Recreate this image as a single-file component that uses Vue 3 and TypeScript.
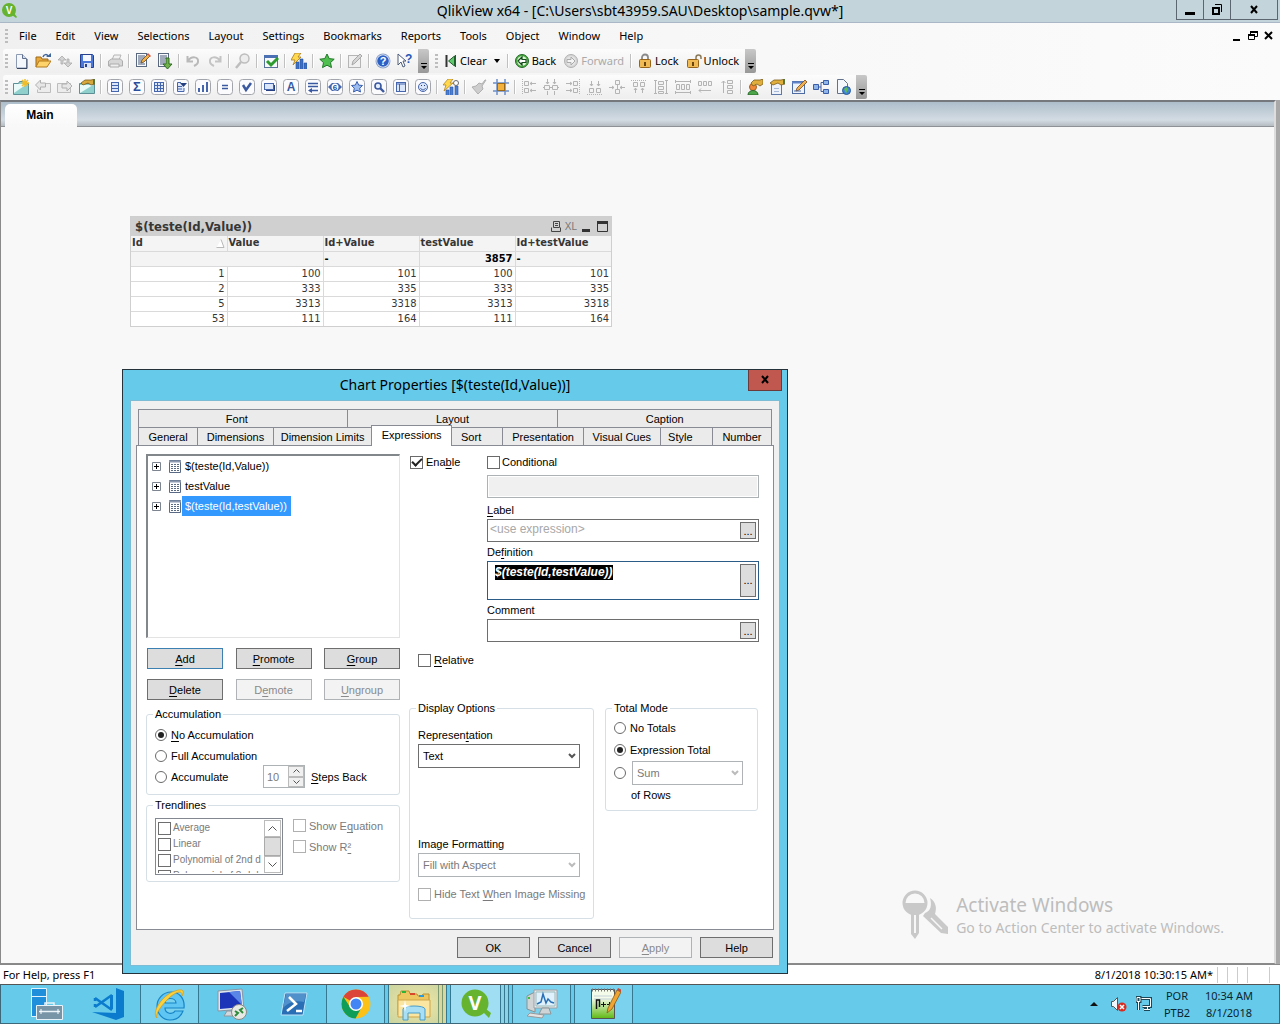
<script setup lang="ts">
import { onMounted, ref } from 'vue'

type ToolItem = { icon: string; label: string; off?: boolean } | null

const menus = ['File', 'Edit', 'View', 'Selections', 'Layout', 'Settings', 'Bookmarks', 'Reports', 'Tools', 'Object', 'Window', 'Help']

const boxed = (inner: string): string =>
  `<rect x=".5" y=".5" width="15" height="15" rx="3" fill="#fbfbfd" stroke="#a3a5ac"/>${inner}`
const glyph = (size: number, y: number, text: string, fill = '#2c4c9c'): string =>
  `<text x="8" y="${y}" font-family="Liberation Sans, sans-serif" font-weight="700" font-size="${size}" text-anchor="middle" fill="${fill}">${text}</text>`
const aligned = (inner: string): string => `<g fill="#f3f3f3" stroke="#b4b4b4">${inner}</g>`

const icons: Record<string, string> = {
  new: '<path d="M3.500 1.500h6l4 4v9.500h-10z" fill="#f4f8fd" stroke="#8c9ab4"/><path d="M9.500 1.500v4h4" fill="#cfdcec" stroke="#64718c"/><path d="M4 15.500h10V6" fill="none" stroke="#38465f"/>',
  open: '<path d="M1 14V4h5l1 2h6v3" fill="#e9a83a" stroke="#9c6a1a"/><path d="M1 14l3-6h12l-4 6z" fill="#ffd36b" stroke="#b37a1e"/><path d="M8 4c1-3 4-3 5-1" fill="none" stroke="#41669a" stroke-width="1.500"/><path d="M11 4h5V0z" fill="#41669a"/>',
  reload: '<path d="M1 7l4-4 4 4H6v4H4V7zM7 10h3V6h2v4h3l-4 4z" fill="#d3d3d3" stroke="#a9a9a9" stroke-width=".8"/>',
  save: '<path d="M1.500 1.500h12l1 1v12h-13z" fill="#4b78d8" stroke="#24408f"/><rect x="4" y="2" width="8" height="6" fill="#f4f7ff"/><rect x="5" y="10" width="7" height="5" fill="#dbe3f4"/><rect x="6" y="11" width="2" height="3" fill="#24408f"/>',
  print: '<path d="M5 7l2-5h7l-2 5z" fill="#f1f1f1" stroke="#b6b6b6"/><path d="M1.500 8l3-2h9l2 2v5h-14z" fill="#d7d7d7" stroke="#adadad"/><path d="M3 11h9v3H3z" fill="#efefef" stroke="#adadad"/>',
  script: '<rect x="1.500" y=".5" width="10" height="13" fill="#f7f9fc" stroke="#59677f"/><path d="M3 3h7M3 5h6M3 7h4M3 9h4M3 11h7" stroke="#4a5b78"/><path d="M6 10l1-3 6-6 2 2-6 6z" fill="#f2b04b" stroke="#6a4a24" stroke-width=".8"/><path d="M12 1l1-1 3 3-1 1z" fill="#d55a4a"/>',
  reloadDoc: '<rect x="1.500" y=".5" width="10" height="13" fill="#f7f9fc" stroke="#59677f"/><path d="M3 3h7M3 5h7M3 7h5M3 9h5M3 11h5" stroke="#4a5b78"/><path d="M9 5h3v6h3l-4.500 5L6 11h3z" fill="#6fb04b" stroke="#2f6b22"/>',
  undo: '<path d="M2.500 3v5.500H8M3 8c3-5 11-5 10 1 0 2-2 3-4 4" fill="none" stroke="#b9b9b9" stroke-width="2"/>',
  redo: '<path d="M13.500 3v5.500H8M13 8C10 3 2 3 3 9c0 2 2 3 4 4" fill="none" stroke="#c4c4c4" stroke-width="2"/>',
  find: '<circle cx="9.500" cy="5.500" r="4.500" fill="#ededed" stroke="#bdbdbd" stroke-width="1.500"/><path d="M6 9l-5 6" stroke="#bdbdbd" stroke-width="2.500"/>',
  select: '<rect x="1.500" y="2.500" width="13" height="12" fill="#f6f8fc" stroke="#58729c"/><rect x="1" y="2" width="14" height="3" fill="#4c70b4"/><path d="M4 8l4 4 7-7" fill="none" stroke="#2d9b2d" stroke-width="3"/>',
  wizard: '<path d="M5 16V9h3v7M9 16V6h3v10M13 16v-6h3v6" fill="#3d6fc2" stroke="#2750a0" stroke-width=".6"/><path d="M4 0h6L7 4h3L2 12l2-5H0z" fill="#ffd84d" stroke="#a8791a" stroke-width=".8"/>',
  star: '<path d="M8 1l2.200 4.600 5 .6-3.700 3.400 1 5L8 12.200 3.500 14.600l1-5L.8 6.200l5-.6z" fill="#4fc04f" stroke="#22772a"/>',
  note: '<rect x="1.500" y="2.500" width="12" height="12" fill="#f0f0f0" stroke="#b5b5b5"/><path d="M5 12l1-4 7-7 2 2-7 7z" fill="#d5d5d5" stroke="#a8a8a8"/>',
  help: '<circle cx="8" cy="8" r="7.500" fill="#8fa3c8"/><circle cx="8" cy="8" r="6.500" fill="#e8effb"/><circle cx="8" cy="8" r="5.800" fill="#2c5fc4"/>' + glyph(11, 12, '?', '#fff'),
  whats: '<path d="M1 1v11l3-3 2 5 2-1-2-5h3z" fill="#fff" stroke="#4c5c7c"/><text x="8" y="10" font-family="Liberation Sans, sans-serif" font-weight="700" font-size="12" fill="#2458b8">?</text>',
  addSheet: '<path d="M.5 4.500h5l1-2h4v2h5v11H.5z" fill="#8fd0cc" stroke="#5d9096"/><path d="M1 14L14 5H1z" fill="#e9faf8"/><path d="M12 0v8M8 4h8M9 1l6 6M15 1L9 7" stroke="#f0be2c" stroke-width="1.500"/>',
  left: '<path d="M5.500 4.500h10v9h-13v-3" fill="#ececec" stroke="#bdbdbd"/><path d="M.5 6l5-5v3h5v4h-5v3z" fill="#e6e6e6" stroke="#b0b0b0"/>',
  right: '<path d="M.5 4.500h13v9H.5z" fill="#ececec" stroke="#bdbdbd"/><path d="M15 7l-5-5v3H5v4h5v3z" fill="#e6e6e6" stroke="#b0b0b0"/>',
  sheetProps: '<path d="M.5 4.500h15v10H.5z" fill="#8fd0cc" stroke="#5d9096"/><path d="M1 14L14 6H1z" fill="#e9faf8"/><path d="M2 4l4-3h6l4-1v5l-4 1-3-2-5 2z" fill="#d7a83c" stroke="#7a5b1c" stroke-width=".8"/><path d="M14 0h2v5h-2z" fill="#58743a"/>',
  list: boxed('<rect x="4.500" y="3.500" width="7" height="9" fill="#dbe6fa" stroke="#4565ad"/><path d="M5 6.500h6M5 9.500h6" stroke="#4565ad"/>'),
  sigma: boxed(glyph(13, 12, 'Σ')),
  grid: boxed('<rect x="3.500" y="3.500" width="9" height="9" fill="#dbe6fa" stroke="#4565ad"/><path d="M6.500 3v10M9.500 3v10M3 6.500h10M3 9.500h10" stroke="#4565ad"/>'),
  multi: boxed('<path d="M11 9v3.500H4.500v-9H8" fill="#dbe6fa" stroke="#4565ad"/><path d="M5 7.500h4M5 10h4" stroke="#4565ad"/><path d="M7 4h7l-3.500 4z" fill="#263f80"/>'),
  bars: boxed('<path d="M3 9h2v4H3zM7 6h2v7H7zM11 3h2v10h-2z" fill="#4565ad"/>'),
  input: boxed('<path d="M5 6.500h6M5 9.500h6" stroke="#3a589f" stroke-width="1.500"/>'),
  tick: boxed('<path d="M4 6l3 5 5-7" fill="none" stroke="#3a589f" stroke-width="2.500"/>'),
  button: boxed('<rect x="5" y="6" width="9" height="6" fill="#263f80"/><rect x="3.500" y="4.500" width="9" height="6" fill="#dbe6fa" stroke="#4565ad"/>'),
  text: boxed(glyph(12, 12, 'A', '#3a589f')),
  lines: boxed('<path d="M3 4.500h10M3 7.500h10M5 11.500h8" stroke="#3a589f" stroke-width="1.300"/><path d="M3 11.500l4-2.500v5z" fill="#3a589f"/>'),
  gauge: boxed('<path d="M1 8l4-4h6l4 4-4 4H5z" fill="#4565ad"/><circle cx="8" cy="8" r="3.500" fill="#fff"/>' + glyph(8, 11, '6')),
  starBox: boxed('<path d="M8 2.500l1.700 3.600 3.800.4-2.800 2.700.8 3.800L8 11.200 4.500 13l.8-3.800-2.800-2.700 3.800-.4z" fill="#9dbcf0" stroke="#3a60b0"/>'),
  search: boxed('<circle cx="7" cy="7" r="3" fill="#e5eefc" stroke="#3a589f" stroke-width="1.600"/><path d="M9 9l4 4" stroke="#3a589f" stroke-width="2.400"/>'),
  container: boxed('<rect x="3.500" y="3.500" width="9" height="9" fill="#dbe6fa" stroke="#4565ad"/><path d="M3 5h10M6.500 5v8" stroke="#4565ad"/>'),
  smile: boxed('<circle cx="8" cy="8" r="4.500" fill="#dbe6fa" stroke="#4565ad"/><path d="M5.500 9c1 2.500 4 2.500 5 0" fill="none" stroke="#3a589f"/><path d="M6 6h1v1H6zM9 6h1v1H9z" fill="#263f80"/>'),
  chartWizard: '<path d="M3 16v-5h3v5M7 16V8h3v8M12 16V7h3v9" fill="#4b7fd4" stroke="#2750a0" stroke-width=".6"/><path d="M5 0h5L7 4h3L1 12l2-6H0z" fill="#ffd84d" stroke="#a8791a" stroke-width=".7"/><circle cx="13" cy="4" r="2.500" fill="#fff" stroke="#6a6a6a"/>',
  brush: '<path d="M15 1l-4 6 1 3-5 5-6-7 4-1 3-3 3 1 3-4z" fill="#cdcdcd" stroke="#b0b0b0"/>',
  snap: '<path d="M4 0v16M12 0v16M0 4h16M0 12h16" stroke="#6e8fc8" stroke-width="1.500"/><rect x="4.500" y="4.500" width="7" height="7" fill="#f4b23c" stroke="#9a6a1c"/>',
  al1: aligned('<path d="M1.500 0v16" stroke-dasharray="1 1"/><path d="M3.500 2.500h4v4h-4zM3.500 9.500h4v4h-4zM9 4.500h6M9 11.500h6M11 3l-2 1.500L11 6M11 10l-2 1.500 2 1.500"/>'),
  al2: aligned('<path d="M0 8.500h16"/><path d="M1.500 6.500h5v4h-5zM9.500 6.500h5v4h-5zM4.500 0v5M11.500 0v5M4.500 12v4M11.500 12v4M3 3l1.500 2L6 3M10 3l1.500 2L13 3"/>'),
  al3: aligned('<path d="M14.500 0v16" stroke-dasharray="1 1"/><path d="M8.500 2.500h4v4h-4zM8.500 9.500h4v4h-4zM1 4.500h6M1 11.500h6M5 3l2 1.500L5 6M5 10l2 1.500L5 13"/>'),
  al4: aligned('<path d="M0 15.500h16" stroke-dasharray="1 1"/><path d="M2.500 9.500h4v4h-4zM9.500 9.500h4v4h-4zM4.500 2v5M11.500 2v5M3 5l1.500 2L6 5M10 5l1.500 2L13 5"/>'),
  al5: aligned('<path d="M6.500 1.500h4v4h-4zM6.500 10.500h4v4h-4zM0 8.500h5M11 8.500h5M3 7l2 1.500L3 10M13 7l-2 1.500 2 1.500M8.500 6v4"/>'),
  al6: aligned('<path d="M0 1.500h16" stroke-dasharray="1 1"/><path d="M2.500 3.500h4v4h-4zM9.500 3.500h4v4h-4zM4.500 9v5M11.500 9v5M3 11l1.500-2L6 11M10 11l1.500-2 1.500 2"/>'),
  al7: aligned('<path d="M5.500 2.500h5v3h-5zM5.500 7.500h5v3h-5zM5.500 12.500h5v2h-5zM2.500 2v12M13.500 2v12M1 1.500h3M1 14.500h3M12 1.500h3M12 14.500h3"/>'),
  al8: aligned('<path d="M1.500 5.500h3v5h-3zM6.500 5.500h3v5h-3zM11.500 5.500h3v5h-3zM1 2.500h14M1 13.500h14M.5 1v3M15.500 1v3M.5 12v3M15.500 12v3"/>'),
  al9: aligned('<path d="M1.500 2.500h3v4h-3zM6.500 2.500h3v4h-3zM11.500 2.500h3v4h-3zM2 11.500h12M4 9.500l-2 2 2 2"/>'),
  al10: aligned('<path d="M8.500 1.500h5v3h-5zM8.500 6.500h5v3h-5zM8.500 11.500h5v3h-5zM4.500 2v12M2.500 4l2-2 2 2"/>'),
  user: '<circle cx="6" cy="8" r="3.500" fill="#f08a3a" stroke="#a65f1e"/><path d="M1 16c0-6 10-6 10 0z" fill="#4da64a" stroke="#2b6b2a"/><path d="M4 4l3-3h6l3-1v5l-3 2-3-2-4 2z" fill="#e0ae3c" stroke="#7a5b1c" stroke-width=".8"/>',
  docProps: '<rect x="2.500" y="3.500" width="10" height="12" fill="#eef3fb" stroke="#5e78a8"/><path d="M1 4l4-3h7l4-1v5l-4 1-3-2-5 2z" fill="#e0ae3c" stroke="#7a5b1c" stroke-width=".8"/><path d="M14 0h2v5h-2z" fill="#58743a"/><path d="M5 9.500h5M5 12.500h5" stroke="#a9bad8"/>',
  editModule: '<rect x="1.500" y="2.500" width="12" height="12" fill="#eef3fb" stroke="#4e6ba3"/><path d="M1 3.500h13" stroke="#5f83c6" stroke-width="2"/><path d="M5 12l1-3 8-8 2 2-8 8z" fill="#f0b14c" stroke="#7a4a20" stroke-width=".8"/><path d="M3 12h7" stroke="#4e6ba3"/>',
  tables: '<path d="M5 8h3M8 3.500v9M8 3.500h3M8 12.500h3" stroke="#45619c" fill="none"/><path d="M.5 5.500h5v5h-5zM10.500 1.500h5v4h-5zM10.500 10.500h5v4h-5z" fill="#8fb4ea" stroke="#3a5da8"/>',
  web: '<path d="M2.500.5h6l4 4v10h-10z" fill="#f4f8fd" stroke="#64718c"/><circle cx="11.500" cy="11.500" r="4" fill="#3f86d4" stroke="#28589a"/><path d="M9 10l3-2 1 3-2 3z" fill="#62bb4e"/>',
  clear: '<path d="M4.500 2v12" stroke="#333" stroke-width="2"/><path d="M6.500 8l6-5v10z" fill="#5fc76c" stroke="#1f5f2b"/><path d="M13.500 2v12" stroke="#1f5f2b"/>',
  back: '<circle cx="8" cy="8" r="6.500" fill="#4cae3f" stroke="#246a2a"/><circle cx="8" cy="8" r="4.800" fill="#d9f5d2"/><path d="M4 8l4-4v2.500h4v3H8V12z" fill="#fff" stroke="#14491c" stroke-width="1.200"/>',
  forward: '<circle cx="8" cy="8" r="6.500" fill="#d5d5d5" stroke="#b2b2b2"/><circle cx="8" cy="8" r="4.800" fill="#e4e4e4"/><path d="M12 8L8 4v2.500H4v3h4V12z" fill="#f4f4f4" stroke="#aaa"/>',
  lock: '<path d="M5 7V4.500a3 3 0 0 1 6 0V7" fill="none" stroke="#8a8a8a" stroke-width="1.800"/><rect x="2.500" y="6.500" width="11" height="8" rx="1" fill="#f0bb55" stroke="#96651b"/><path d="M7 9h2v4H7z" fill="#6a4510"/>',
  unlock: '<path d="M10 7V4.500a2.500 2.500 0 0 1 5 0V6" fill="none" stroke="#8a7a5a" stroke-width="1.500"/><rect x="1.500" y="6.500" width="11" height="8" rx="1" fill="#f0bb55" stroke="#96651b"/><path d="M6 9h2v4H6z" fill="#6a4510"/>',
}

const standardTools: ToolItem[] = [
  { icon: 'new', label: 'New' }, { icon: 'open', label: 'Open' }, { icon: 'reload', label: 'Refresh', off: true }, { icon: 'save', label: 'Save' }, null,
  { icon: 'print', label: 'Print', off: true }, null,
  { icon: 'script', label: 'Edit Script' }, { icon: 'reloadDoc', label: 'Reload' }, null,
  { icon: 'undo', label: 'Undo', off: true }, { icon: 'redo', label: 'Redo', off: true }, null,
  { icon: 'find', label: 'Search', off: true }, null,
  { icon: 'select', label: 'Current Selections' }, null,
  { icon: 'wizard', label: 'Quick Chart Wizard' }, null,
  { icon: 'star', label: 'Add Bookmark' }, null,
  { icon: 'note', label: 'Notes', off: true }, null,
  { icon: 'help', label: 'Help' }, { icon: 'whats', label: 'Context Help' },
]

const tool = (icon: string): ToolItem => ({ icon, label: icon })
const designTools: ToolItem[] = [
  ...['addSheet', 'left', 'right', 'sheetProps'].map(tool), null,
  ...['list', 'sigma', 'grid', 'multi', 'bars', 'input', 'tick', 'button', 'text', 'lines', 'gauge', 'starBox', 'search', 'container', 'smile'].map(tool), null,
  tool('chartWizard'), null,
  ...['brush', 'snap'].map(tool), null,
  ...['al1', 'al2', 'al3', 'al4', 'al5', 'al6', 'al7', 'al8', 'al9', 'al10'].map(tool), null,
  ...['user', 'docProps', 'editModule', 'tables', 'web'].map(tool),
]

const columns = ['Id', 'Value', 'Id+Value', 'testValue', 'Id+testValue']
const rows = [
  [1, 100, 101, 100, 101],
  [2, 333, 335, 333, 335],
  [5, 3313, 3318, 3313, 3318],
  [53, 111, 164, 111, 164],
]

const upperTabs = [{ name: 'Font', size: 209 }, { name: 'Layout', size: 211 }, { name: 'Caption', size: 214 }]
const lowerTabs = [
  { name: 'General', size: 59 }, { name: 'Dimensions', size: 76 }, { name: 'Dimension Limits', size: 99 },
  { name: 'Expressions', size: 80 }, { name: 'Sort', size: 51 }, { name: 'Presentation', size: 81 },
  { name: 'Visual Cues', size: 77 }, { name: 'Style', size: 52 }, { name: 'Number', size: 59 },
]
const shortTabs = ['Font', 'Sort', 'Style']
const expressions = ['$(teste(Id,Value))', 'testValue', '$(teste(Id,testValue))']
const trendlines = ['Average', 'Linear', 'Polynomial of 2nd d', 'Polynomial of 3rd d']

const accumulation = ref('none')
const totalMode = ref('expression')
const enabled = ref(true)
const definition = ref('$(teste(Id,testValue))')
const definitionBox = ref<HTMLTextAreaElement | null>(null)

onMounted(() => {
  definitionBox.value?.focus({ preventScroll: true })
  definitionBox.value?.select()
})
</script>

<template>
  <div class="screen">
    <header class="titlebar">
      <svg class="logo" width="16" height="16" viewBox="0 0 16 16">
        <circle cx="7" cy="7" r="7" fill="#65b32e" /><path d="M10 12l4 3 1-1-3-4z" fill="#65b32e" />
        <text x="7" y="11" font-family="Liberation Sans, sans-serif" font-weight="700" font-size="10" text-anchor="middle" fill="#fff">V</text>
      </svg>
      <h1>QlikView x64 - [C:\Users\sbt43959.SAU\Desktop\sample.qvw*]</h1>
      <div class="winbtns">
        <button aria-label="Minimize"><svg width="12" height="12"><path d="M1 8h10v3H1z" /></svg></button>
        <button aria-label="Restore"><svg width="12" height="12"><path d="M2 4h6v6H2z" fill="none" stroke="#000" stroke-width="2" /><path d="M4 .5h6.500V8" fill="none" stroke="#000" /></svg></button>
        <button class="wide" aria-label="Close"><svg width="12" height="12"><path d="M3 2l6 7M9 2L3 9" stroke="#000" stroke-width="2" /></svg></button>
      </div>
    </header>

    <div class="bars">
      <nav class="menubar">
        <span class="grip"></span>
        <button v-for="m in menus" :key="m">{{ m }}</button>
        <div class="childbtns">
          <svg width="10" height="12"><path d="M1 9h7v2H1z" /></svg>
          <svg width="10" height="12"><path d="M2.500 4V1.500h7v5H7M.5 4.500h6v5h-6z" fill="none" stroke="#000" /><path d="M2 1h8v2H2zM0 4h7v2H0z" /></svg>
          <svg width="10" height="12"><path d="M1 2l7 7M8 2L1 9" stroke="#000" stroke-width="2" /></svg>
        </div>
      </nav>

      <div class="toolbar">
        <span class="grip"></span>
        <template v-for="(t, i) in standardTools" :key="i">
          <button v-if="t" class="tool" :aria-label="t.label" :disabled="t.off"><svg width="16" height="16" viewBox="0 0 16 16" v-html="icons[t.icon]"></svg></button>
          <i v-else class="sep"></i>
        </template>
        <button class="overflow" aria-label="Toolbar options"><svg width="8" height="8"><path d="M1 0h6v1H1zM1 3h6L4 6z" /></svg></button>
        <span class="grip second"></span>
        <button class="cmd"><svg width="16" height="16" viewBox="0 0 16 16" v-html="icons.clear"></svg>Clear<svg class="caret" width="8" height="4"><path d="M1 0h6L4 4z" /></svg></button>
        <i class="sep"></i>
        <button class="cmd"><svg width="16" height="16" viewBox="0 0 16 16" v-html="icons.back"></svg>Back</button>
        <button class="cmd" disabled><svg width="16" height="16" viewBox="0 0 16 16" v-html="icons.forward"></svg>Forward</button>
        <i class="sep"></i>
        <button class="cmd"><svg width="16" height="16" viewBox="0 0 16 16" v-html="icons.lock"></svg>Lock</button>
        <button class="cmd"><svg width="16" height="16" viewBox="0 0 16 16" v-html="icons.unlock"></svg>Unlock</button>
        <button class="overflow" aria-label="Toolbar options"><svg width="8" height="8"><path d="M1 0h6v1H1zM1 3h6L4 6z" /></svg></button>
      </div>

      <div class="toolbar bottom">
        <span class="grip"></span>
        <template v-for="(t, i) in designTools" :key="i">
          <button v-if="t" class="tool" :aria-label="t.label"><svg width="16" height="16" viewBox="0 0 16 16" v-html="icons[t.icon]"></svg></button>
          <i v-else class="sep"></i>
        </template>
        <button class="overflow" aria-label="Toolbar options"><svg width="8" height="8"><path d="M1 0h6v1H1zM1 3h6L4 6z" /></svg></button>
      </div>
    </div>

    <main class="workspace">
      <div class="sheettabs"><button class="sheettab">Main</button></div>
      <div class="sheet"></div>
    </main>

    <footer class="statusbar">
      <span>For Help, press F1</span>
      <span class="stamp">8/1/2018 10:30:15 AM*</span>
      <i></i><i></i><i></i><i class="last"></i>
    </footer>

    <nav class="taskbar">
      <button class="task" aria-label="Server Manager">
        <svg width="34" height="34" viewBox="0 0 34 34"><path d="M2.500 1.500h15v28h-15z" fill="#1f8fdc" stroke="#e4f4fc" /><path d="M2 9.500h16" stroke="#e4f4fc" /><path d="M7.500 18.500h26v14h-26z" fill="#7895a8" stroke="#e9f3f8" /><path d="M16 18v-2h9v2M10 24.500h21" fill="none" stroke="#e9f3f8" stroke-width="1.500" /><path d="M12 22v5M29 22v5" stroke="#fff" /></svg>
      </button>
      <button class="task" aria-label="Visual Studio Code">
        <svg width="34" height="34" viewBox="0 0 34 34"><path d="M25 1l8 3v26l-8 3z" fill="#0b7bce" /><path d="M1 25l24 1v7z" fill="#0b7bce" /><path d="M20.500 8v14" stroke="#0b7bce" stroke-width="3" /><path d="M21 8L4 20M4 11l17 12M4 11v3M4 17v3" stroke="#0b7bce" stroke-width="2.500" fill="none" /></svg>
      </button>
      <button class="task open" aria-label="Internet Explorer">
        <svg width="34" height="34" viewBox="0 0 34 34"><path fill-rule="evenodd" d="M31 21H12c0 6 8 7 10 3h8C27 32 20 33 17 33 9 33 4 26 4 19S10 5 18 5s14 6 13 16zM12 16h11c0-6-11-6-11 0z" fill="#5fc6f4" stroke="#1784c6" stroke-width="1.200" /><path d="M4 31C-2 26 9 8 22 4c8-3 10 0 7 5 1-7-7-4-14 3C7 20 2 28 4 31z" fill="#fbd13c" stroke="#d49a1a" stroke-width=".7" /></svg>
      </button>
      <button class="task" aria-label="Remote Desktop">
        <svg width="34" height="34" viewBox="0 0 34 34"><path d="M3 4l24-2 2 20-26 2z" fill="#dfe6ee" stroke="#8a96a4" /><path d="M5 6l20-2 2 16L5 22z" fill="#1c35b8" /><path d="M14 5l11-1 2 14z" fill="#5a86e8" /><path d="M12 24h8l2 5H9z" fill="#d3d8dc" stroke="#8c959c" /><circle cx="24" cy="25" r="7.500" fill="#e8e8e4" stroke="#8a8a86" /><path d="M20 24l3 2-3 3M28 21l-3 2 3 3" fill="none" stroke="#2d8b3a" stroke-width="2" /></svg>
      </button>
      <button class="task" aria-label="PowerShell">
        <svg width="34" height="34" viewBox="0 0 34 34"><path d="M8 6h22l-4 22H4z" fill="#2a6fb5" stroke="#bfe2f6" /><path d="M9 7h20l-2 8C18 13 11 16 6 21z" fill="#6aa9dc" opacity=".6" /><path d="M12 10l7 7-9 7M19 24h6" fill="none" stroke="#fff" stroke-width="2.500" /></svg>
      </button>
      <button class="task open" aria-label="Chrome">
        <svg width="34" height="34" viewBox="0 0 34 34"><circle cx="17" cy="17" r="14.500" fill="#fbc116" /><path d="M17 17L4.400 9.800a14.500 14.500 0 0 1 25.200 0L17 10z" fill="#db4437" /><path d="M4.400 9.800a14.500 14.500 0 0 0 12.100 21.700l6-11L11 20z" fill="#0f9d58" /><circle cx="17" cy="17" r="7" fill="#fff" /><circle cx="17" cy="17" r="5.500" fill="#4285f4" /></svg>
      </button>
      <button class="task open stack warm" aria-label="File Explorer">
        <svg width="34" height="34" viewBox="0 0 34 34"><path d="M1 8h2l1-4h8l1 3h7l1 2h4l1-2h6v21H1z" fill="#edc860" stroke="#bd9130" /><path d="M5 4h4v2H5z" fill="#2db53a" /><path d="M13 6h5v2h-5z" fill="#d9482a" /><path d="M22 8h5v2h-5z" fill="#2a9ae0" /><path d="M1 13h32v17H1z" fill="#fae6a0" stroke="#cfa548" /><path d="M6 33V22c0-4 22-4 22 0v11h-5v-7H11v7z" fill="#a9dff5" stroke="#4a9dc8" /><path d="M8 13l1 5 5 1-5 1-1 5-1-5-5-1 5-1z" fill="#fff" /></svg>
      </button>
      <button class="task open stack active" aria-label="QlikView">
        <svg width="34" height="34" viewBox="0 0 34 34"><circle cx="16" cy="16" r="13.500" fill="#65b32e" /><path d="M24 25l6 6 2-5-5-4z" fill="#65b32e" /><text x="16" y="23" font-family="Open Sans, sans-serif" font-weight="700" font-size="20" text-anchor="middle" fill="#fff">V</text></svg>
      </button>
      <button class="task open" aria-label="Performance Monitor">
        <svg width="34" height="34" viewBox="0 0 34 34"><path d="M2 9l8-4v20l-8-3z" fill="#d0d4d4" stroke="#8a9090" /><path d="M9 3h23v18H9z" fill="#e6eaec" stroke="#9aa2a6" /><path d="M11 5h19v14H11z" fill="#dff1fc" stroke="#9bb" /><path d="M12 17l4-2 2-8 3 9 2-4 3 3 3 1" fill="none" stroke="#2a6fb5" stroke-width="1.500" /><path d="M17 21h7l2 6H14z" fill="#cfd4d6" stroke="#8e9698" /><path d="M5 26l14 2-2 3-15-2z" fill="#e2e2e2" stroke="#999" /><path d="M3 10h2v2H3z" fill="#3abf3a" /></svg>
      </button>
      <button class="task open" aria-label="Notepad++">
        <svg width="34" height="34" viewBox="0 0 34 34"><defs><linearGradient id="npp" x2="0" y2="1"><stop offset=".3" stop-color="#f4fbe8" /><stop offset="1" stop-color="#5fb913" /></linearGradient></defs><path d="M4.500 2.500h23v29h-23z" fill="url(#npp)" stroke="#555" /><path d="M5 3h22" stroke="#777" stroke-width="3" stroke-dasharray="1 2" /><path d="M7 9h18M7 12h18" stroke="#c5d2dc" /><path d="M9.500 22V13h3v7" fill="none" stroke="#111" stroke-width="1.500" /><path d="M14 17.500h5M16.500 15v5M20 17.500h5M22.500 15v5" stroke="#111" /><path d="M20 26l1-5L30 3l4 2-9 17z" fill="#f0a533" stroke="#8a5a14" stroke-width=".8" /><path d="M30 3l1-2 4 2-1 2z" fill="#c44a3a" /></svg>
      </button>
      <div class="tray">
        <svg width="8" height="4"><path d="M0 4h8L4 0z" fill="#111" /></svg>
        <svg class="sound" width="16" height="16" viewBox="0 0 16 16"><path d="M.5 5.500h2l4-4v13l-4-4h-2z" fill="#eef7fb" stroke="#555" /><circle cx="11" cy="11" r="4.500" fill="#d82c20" /><path d="M9 9l4 4M13 9l-4 4" stroke="#fff" stroke-width="1.500" /></svg>
        <svg width="16" height="16" viewBox="0 0 16 16"><path d="M5.500 2.500h9v8h-8M8 13.500h6M11.500 11v3M2.500 6v8M1 1.500h3v4H1z" fill="none" stroke="#1d4757" stroke-width="3" /><path d="M5.500 2.500h9v8h-8M8 13.500h6M11.500 11v3M2.500 6v8M1 1.500h3v4H1z" fill="none" stroke="#fff" /></svg>
        <span class="lang">POR<br />PTB2</span>
        <span class="clock">10:34 AM<br />8/1/2018</span>
      </div>
    </nav>

    <section class="chart">
      <div class="charthead">
        <h2>$(teste(Id,Value))</h2>
        <svg width="10" height="11"><path d="M2.500.5h6v6h-6zM4 2.500h3M4 4.500h3M.5 6.500v4h9v-4" fill="none" stroke="#444" /></svg>
        <span class="xl">XL</span>
        <svg width="10" height="11"><path d="M1 8h8v3H1z" fill="#333" /></svg>
        <svg class="max" width="11" height="11"><path d="M.5.500h10v10H.5z" fill="none" stroke="#333" /><path d="M0 0h11v3H0z" fill="#333" /></svg>
      </div>
      <table>
        <thead>
          <tr><th v-for="(c, i) in columns" :key="c"><div>{{ c }}<svg v-if="i === 0" width="9" height="9"><path d="M.5 8.500L5 .5l3 8z" fill="#fff" /><path d="M.5 8.500h7.500L5 .5" fill="none" stroke="#b8b8b8" /></svg></div></th></tr>
        </thead>
        <tbody>
          <tr class="total"><td colspan="2"></td><td class="dash">-</td><td>3857</td><td class="dash">-</td></tr>
          <tr v-for="r in rows" :key="r[0]"><td v-for="(v, i) in r" :key="i">{{ v }}</td></tr>
        </tbody>
      </table>
    </section>

    <aside class="watermark">
      <svg width="48" height="50" viewBox="0 0 48 50"><circle cx="13" cy="13" r="11" fill="none" stroke="#c9c9c9" stroke-width="3" /><path d="M2 13h22c0 6-4 9-7 10v20l-4 6-4-5V23c-4-1-7-5-7-10z" fill="#c9c9c9" /><path d="M13 25v18" stroke="#f7f7f7" stroke-width="2" /><path d="M28 8c6 4 7 10 5 16l13 13v7l-7-1-18-17 2-3c6-2 7-8 5-15z" fill="#c9c9c9" /><path d="M29 28l11 11" stroke="#f7f7f7" stroke-width="1.500" /></svg>
      <div><p class="big">Activate Windows</p><p>Go to Action Center to activate Windows.</p></div>
    </aside>

    <section class="dialog" role="dialog" aria-labelledby="dlgtitle">
      <div class="dlghead">
        <h2 id="dlgtitle">Chart Properties [$(teste(Id,Value))]</h2>
        <button aria-label="Close"><svg width="10" height="10"><path d="M2 1l6 7M8 1L2 8" stroke="#000" stroke-width="2" /></svg></button>
      </div>
      <div class="dlgbody">
        <div class="tabrow"><button v-for="t in upperTabs" :key="t.name" class="tab" :class="{ short: shortTabs.includes(t.name) }" :style="{ flexGrow: t.size }"><span>{{ t.name }}</span></button></div>
        <div class="tabrow lower"><button v-for="t in lowerTabs" :key="t.name" class="tab" :class="{ current: t.name === 'Expressions', short: shortTabs.includes(t.name) }" :style="{ flexGrow: t.size }"><span>{{ t.name }}</span></button></div>
        <div class="page">
          <div class="leftcol">
            <ul class="tree">
              <li v-for="(e, i) in expressions" :key="e">
                <button class="expand" aria-label="Expand"><svg width="9" height="9"><path d="M.5.500h8v8h-8z" fill="#fff" stroke="#7c8590" /><path d="M2 4.500h5M4.500 2v5" stroke="#000" /></svg></button>
                <svg width="12" height="13"><path d="M.5.500h11v12H.5z" fill="#fff" stroke="#5a6a85" /><path d="M0 1.500h12" stroke="#8b98ae" stroke-width="2" /><path d="M2 4.500h8M2 6.500h8M2 8.500h8M2 10.500h8" stroke="#5a6a85" stroke-dasharray="2 1" /></svg>
                <span :class="{ picked: i === 2 }">{{ e }}</span>
              </li>
            </ul>
            <div class="btngrid">
              <button class="push focus"><u>A</u>dd</button><button class="push"><u>P</u>romote</button><button class="push"><u>G</u>roup</button>
              <button class="push"><u>D</u>elete</button><button class="push" disabled>D<u>e</u>mote</button><button class="push" disabled><u>U</u>ngroup</button>
            </div>
            <fieldset class="accum">
              <legend>Accumulation</legend>
              <label><input v-model="accumulation" type="radio" name="accum" value="none" /><span><u>N</u>o Accumulation</span></label>
              <label><input v-model="accumulation" type="radio" name="accum" value="full" />Full Accumulation</label>
              <div class="steprow">
                <label><input v-model="accumulation" type="radio" name="accum" value="steps" />Accumulate</label>
                <div class="spin">
                  <input id="steps" type="text" value="10" disabled />
                  <div><button aria-label="Increase" disabled><svg width="7" height="4"><path d="M.5 3.500l3-3 3 3" /></svg></button><button aria-label="Decrease" disabled><svg width="7" height="4"><path d="M.5.500l3 3 3-3" /></svg></button></div>
                </div>
                <label for="steps"><span><u>S</u>teps Back</span></label>
              </div>
            </fieldset>
            <fieldset class="trend">
              <legend>Trendlines</legend>
              <div class="listbox">
                <div class="items"><label v-for="t in trendlines" :key="t"><input type="checkbox" disabled />{{ t }}</label></div>
                <div class="scroll">
                  <button aria-label="Scroll up"><svg width="9" height="5"><path d="M.5 4.500l4-4 4 4" /></svg></button><b></b>
                  <button aria-label="Scroll down"><svg width="9" height="5"><path d="M.5.500l4 4 4-4" /></svg></button>
                </div>
              </div>
              <div class="shows">
                <label class="dim"><input type="checkbox" disabled /><span>Show E<u>q</u>uation</span></label>
                <label class="dim"><input type="checkbox" disabled /><span>Show R<u>²</u></span></label>
              </div>
            </fieldset>
          </div>

          <div class="rightcol">
            <div class="toprow">
              <label class="enable"><input v-model="enabled" type="checkbox" /><span>Ena<u>b</u>le</span></label>
              <div class="form">
                <label><input type="checkbox" />Conditional</label>
                <input class="cond" type="text" aria-label="Condition" disabled />
                <label class="cap" for="lbl"><span><u>L</u>abel</span></label>
                <div class="field"><input id="lbl" type="text" placeholder="&lt;use expression&gt;" /><button aria-label="Edit label">...</button></div>
                <label class="cap" for="def"><span>De<u>f</u>inition</span></label>
                <div class="field tall"><textarea id="def" ref="definitionBox" v-model="definition" spellcheck="false"></textarea><button aria-label="Edit definition">...</button></div>
                <label class="cap" for="com">Comment</label>
                <div class="field"><input id="com" type="text" /><button aria-label="Edit comment">...</button></div>
              </div>
            </div>
            <label class="relative"><input type="checkbox" /><span><u>R</u>elative</span></label>
            <div class="groups">
              <fieldset class="display">
                <legend>Display Options</legend>
                <label for="rep"><span>Represen<u>t</u>ation</span></label>
                <div class="select"><select id="rep"><option>Text</option></select><svg width="8" height="6"><path d="M1 1l3 3 3-3" /></svg></div>
                <label class="imgcap" for="img">Image Formatting</label>
                <div class="select off"><select id="img" disabled><option>Fill with Aspect</option></select><svg width="8" height="6"><path d="M1 1l3 3 3-3" /></svg></div>
                <label class="dim hide"><input type="checkbox" disabled /><span>Hide Text <u>W</u>hen Image Missing</span></label>
              </fieldset>
              <fieldset class="totals">
                <legend>Total Mode</legend>
                <label><input v-model="totalMode" type="radio" name="total" value="none" />No Totals</label>
                <label><input v-model="totalMode" type="radio" name="total" value="expression" />Expression Total</label>
                <div class="sumrow">
                  <input v-model="totalMode" type="radio" name="total" value="sum" aria-label="Aggregate of rows" />
                  <div class="select off"><select id="agg" disabled><option>Sum</option></select><svg width="8" height="6"><path d="M1 1l3 3 3-3" /></svg></div>
                </div>
                <label class="ofrows" for="agg">of Rows</label>
              </fieldset>
            </div>
          </div>
        </div>
        <div class="dlgfoot">
          <button class="push">OK</button><button class="push">Cancel</button><button class="push" disabled><u>A</u>pply</button><button class="push">Help</button>
        </div>
      </div>
    </section>
  </div>
</template>

<style>
body { margin: 0; }
</style>

<style scoped>
* { box-sizing: border-box; }
button { font: inherit; color: inherit; padding: 0; margin: 0; border: 0; background: none; display: flex; align-items: center; justify-content: center; white-space: nowrap; }
h1, h2, p, ul { margin: 0; padding: 0; font-weight: 400; }
svg { flex: none; display: block; }
u { text-underline-offset: 2px; text-decoration-skip-ink: none; }
.screen { position: relative; min-height: 100vh; display: flex; flex-direction: column; overflow: hidden; background: #f8f8f8; font: 11px/16px "Noto Sans", "Open Sans", sans-serif; color: #000; }

.titlebar { height: 23px; background: #c3d5da; border-bottom: 1px solid #a9b7c6; display: flex; align-items: flex-start; padding: 0 2px; }
.logo { margin-top: 3px; }
.titlebar h1 { flex: 1; text-align: center; font-size: 14px; line-height: 22px; padding-left: 86px; }
.winbtns { display: flex; border: 1px solid #5c6670; border-top: 0; height: 20px; }
.winbtns button { width: 27px; border-right: 1px solid #5c6670; }
.winbtns .wide { width: 46px; border: 0; }

.bars { background: linear-gradient(90deg, #f0f0f0, #f8f8f8 60%, #fbfbfb); display: flex; flex-direction: column; }
.menubar { height: 26px; display: flex; align-items: center; gap: 19px; padding-left: 5px; }
.grip { width: 3px; height: 14px; flex: none; background: repeating-linear-gradient(#bdbdbd 0 2px, transparent 2px 4px); }
.menubar .grip { margin-right: -8px; }
.childbtns { margin-left: auto; display: flex; gap: 6px; padding-right: 6px; }
.toolbar { height: 24px; margin: 0 0 2px 3px; display: flex; align-items: center; padding-left: 2px; align-self: flex-start; background: linear-gradient(#fcfcfc, #eee); border-radius: 3px; }
.toolbar.bottom { margin-bottom: 1px; }
.toolbar .grip { margin-right: 2px; }
.toolbar .second { margin: 0 1px 0 6px; }
.tool { width: 22px; height: 24px; }
.sep { width: 2px; height: 14px; margin: 0 2px; background: #c0c0c0; border-right: 1px solid #fff; flex: none; }
.overflow { width: 11px; height: 24px; align-items: flex-end; padding-bottom: 2px; margin-left: 2px; background: linear-gradient(#c8c8c8, #989898); border-radius: 0 2px 2px 0; }
.cmd { height: 24px; padding: 0 4px 0 3px; gap: 2px; }
.cmd:disabled { color: #aaa; }
.caret { margin-left: 4px; }

.workspace { flex: 1; display: flex; flex-direction: column; margin-right: 4px; border: 1px solid #8a8a8a; border-top: 2px solid #75797e; border-right: 2px solid #ddd; box-shadow: 4px 0 #a8a8a8; min-height: 500px; }
.sheettabs { height: 25px; padding: 2px 4px 0; display: flex; background: linear-gradient(#adbecb, #d4dce3 75%, #b5bcc2); border-bottom: 1px solid #8e9296; }
.sheettab { width: 72px; height: 23px; padding: 0 2px 1px 0; background: linear-gradient(#fff, #f8f8f8); border-radius: 5px 5px 0 0; font: 700 12px/14px "Liberation Sans", sans-serif; }
.sheet { flex: 1; background: #f8f8f8; }

.statusbar { height: 20px; background: #fff; border-top: 1px solid #888; display: flex; align-items: center; padding: 0 10px 0 3px; }
.statusbar .stamp { margin-left: auto; margin-right: 4px; }
.statusbar i { width: 10px; height: 16px; border-left: 1px solid #ccc; }
.statusbar i.last { width: 23px; border-right: 1px solid #ccc; }

.taskbar { height: 40px; background: #66caea; border: 1px solid #3d6879; border-top-color: #555; display: flex; align-items: stretch; gap: 3px; padding-left: 15px; }
.task { width: 59px; }
.task.open { background: #7ad2ee; border: solid #35788f; border-width: 0 1px; }
.task.active { background: #a0def4; }
.task.warm { background: radial-gradient(#f3e7a5, #c9d4a0); }
.task.stack { padding-right: 8px; box-shadow: inset -3px 0 #8ad2e4, inset -4px 0 #35788f, inset -7px 0 #8ad2e4, inset -8px 0 #35788f; }
.task.warm.stack { box-shadow: inset -3px 0 #d9d79e, inset -4px 0 #7a9970, inset -7px 0 #d9d79e, inset -8px 0 #7a9970; }
.tray { margin-left: auto; display: flex; align-items: center; gap: 9px; padding-right: 23px; text-align: center; line-height: 17px; }
.sound { margin-left: 4px; }
.lang, .clock { color: #0b2530; }
.lang { width: 32px; }
.clock { width: 54px; white-space: nowrap; }

.chart { position: absolute; left: 130px; top: 216px; width: 482px; border: 1px solid #cfcfcf; font: 11px/14px "DejaVu Sans Condensed", "DejaVu Sans", sans-serif; color: #363636; background: #fff; }
.charthead { height: 19px; display: flex; align-items: center; gap: 4px; padding: 0 3px 0 4px; background: #d0d0d0; }
.charthead h2 { flex: 1; font-size: 13px; line-height: 17px; font-weight: 700; }
.charthead .max { margin-left: 2px; }
.xl { font: 10px/12px "Liberation Sans Narrow", "Liberation Sans", sans-serif; color: #777; }
.chart table { width: 100%; table-layout: fixed; border-collapse: collapse; }
.chart th, .chart td { height: 15px; padding: 0 2px; border: 1px solid #dadada; border-left: 0; line-height: 14px; }
.chart th:last-child, .chart td:last-child { border-right: 0; }
.chart tr:last-child td { border-bottom: 0; }
.chart th { background: #f4f4f4; text-align: left; border-top: 0; padding-left: 1px; }
.chart th div { display: flex; justify-content: space-between; align-items: center; }
.chart td { text-align: right; }
.chart .total td { background: #f4f4f4; color: #000; font-weight: 700; }
.chart .total .dash { text-align: left; padding-left: 1px; }

.watermark { position: absolute; right: 56px; bottom: 84px; display: flex; gap: 6px; align-items: center; color: #bdbdbd; font: 14px/20px "Noto Sans", sans-serif; }
.watermark .big { font-size: 19px; line-height: 26px; }

.dialog { position: absolute; left: 122px; top: 369px; width: 666px; border: 1px solid #26323a; background: #66caea; padding: 0 7px 7px; font: 11px/14px "Liberation Sans", sans-serif; }
.dlghead { height: 30px; position: relative; }
.dlghead h2 { text-align: center; font: 14px/29px "Noto Sans", sans-serif; }
.dlghead button { position: absolute; right: -2px; top: 0; width: 34px; height: 21px; background: #c1584f; border: 1px solid #6b3a3a; border-top: 0; }
.dlgbody { border: 1px solid #7cbcd4; background: #f0f0f0; padding: 8px 5px 7px 5px; }
.tabrow { display: flex; margin: 0 2px 0 2px; border-left: 1px solid #888a94; }
.tab { flex: 1 1 0; height: 18px; background: #ebebeb; border: 1px solid #888a94; border-width: 1px 1px 0 0; }
.tab.short span { padding-right: 12px; }
.tab.current { height: 21px; margin: -2px 0 -1px -1px; background: #fff; border-left-width: 1px; padding-bottom: 2px; position: relative; }
.page { border: 1px solid #888a94; background: #fff; height: 485px; padding: 8px 14px 0 9px; display: flex; gap: 9px; }
.leftcol { width: 254px; flex: none; }
.rightcol { flex: 1; padding-top: 1px; }
.tree { height: 184px; border: 1px solid; border-color: #82878c #e3e3e3 #e3e3e3 #82878c; border-width: 2px 1px 1px 2px; list-style: none; }
.tree li { height: 20px; display: flex; align-items: center; padding-left: 4px; gap: 8px; }
.tree li span { padding: 0 4px 0 3px; margin-left: -7px; line-height: 20px; }
.tree .picked { background: #3399ff; color: #fff; }
.btngrid { display: grid; grid-template-columns: repeat(3, 76px); justify-content: space-between; row-gap: 10px; margin: 10px 0 7px 1px; }
.push { height: 21px; border: 1px solid #6e6e6e; background: #ddd; }
.push.focus { border-color: #3c7fb1; }
.push:disabled { color: #8a8a8a; border-color: #b0b3b5; background: #f3f3f3; }
fieldset { margin: 0; border: 1px solid #d5dfe5; border-radius: 3px; padding: 0 8px; min-width: 0; }
legend { padding: 0 2px; margin-left: -2px; height: 14px; }
label { display: flex; align-items: center; gap: 3px; white-space: nowrap; }
input, select, textarea { font: inherit; color: inherit; margin: 0; border-radius: 0; outline: none; }
input[type="checkbox"], input[type="radio"] { appearance: none; width: 13px; height: 13px; border: 1px solid #6a6a6a; background: #fff; flex: none; display: grid; place-content: center; }
input[type="radio"] { width: 12px; height: 12px; border-radius: 6px; }
input[type="radio"]:checked::before { content: ""; width: 6px; height: 6px; border-radius: 3px; background: #222; }
input[type="checkbox"]:checked::before { content: ""; width: 8px; height: 4px; border: solid #222; border-width: 0 0 2px 2px; transform: rotate(-45deg); margin-bottom: 3px; }
input[type="checkbox"]:disabled { border-color: #b0b0b0; }
.dim { color: #7a7a7a; }
.accum { height: 88px; padding-top: 3px; }
.accum label { height: 21px; gap: 4px; }
.steprow { display: flex; align-items: center; height: 21px; }
.steprow > label:first-child { width: 108px; }
.spin { display: flex; width: 42px; height: 23px; border: 1px solid #adb2b5; margin-right: 6px; color: #7a7a7a; flex: none; }
.spin input { width: 24px; border: 0; background: #fff; padding: 0 3px; }
.spin div { flex: 1; display: flex; flex-direction: column; }
.spin button { flex: 1; background: #f0f0f0; border: 1px solid #bbb; }
.spin path, .scroll path { fill: none; stroke: #555; }
.trend { height: 84px; margin-top: 3px; padding-top: 6px; display: flex; gap: 10px; }
.listbox { width: 128px; height: 57px; border: 1px solid #828790; display: flex; padding: 1px; color: #7a7a7a; font-size: 10px; }
.items { flex: 1; min-width: 0; overflow: hidden; }
.items label { height: 16px; gap: 2px; }
.items input:disabled { border-color: #6e6e6e; margin-left: 1px; }
.scroll { width: 17px; display: flex; flex-direction: column; background: #eee; }
.scroll button { height: 17px; background: #fff; border: 1px solid #bbb; }
.scroll b { flex: 1; background: #ddd; border: 1px solid #aaa; }
.shows label { height: 21px; }
.shows { margin-top: -3px; }
.toprow { display: flex; }
.enable { width: 78px; height: 14px; padding-left: 1px; }
.form { width: 272px; display: flex; flex-direction: column; }
.form > label { height: 14px; gap: 2px; }
.cond { height: 23px; margin: 6px 0 5px; border: 1px solid #adb2b5; background: #f0f0f0; box-shadow: inset 0 0 0 1px #fff; }
.cap { margin-bottom: 2px; }
.field { height: 23px; display: flex; align-items: stretch; border: 1px solid #6e6e6e; padding: 2px; margin-bottom: 3px; background: #fff; }
.field input, .field textarea { flex: 1; min-width: 0; border: 0; padding: 0; resize: none; background: none; }
.field input { font-size: 12px; padding-bottom: 3px; }
.field input::placeholder { color: #a8a8a8; }
.field textarea { font: italic 700 12px/15px "Liberation Sans", sans-serif; padding: 1px 0 0 5px; overflow: hidden; }
.field textarea::selection { background: #000; color: #fff; }
.field button { width: 16px; background: #ddd; border: 1px solid #6e6e6e; align-items: flex-end; padding-bottom: 1px; line-height: 12px; }
.field.tall { height: 39px; border-color: #2b5c88; }
.field.tall button { align-items: center; }
.relative { margin: 8px 0 0 9px; height: 14px; }
.groups { display: flex; align-items: flex-start; gap: 11px; margin-top: 34px; }
.display { width: 185px; height: 218px; }
.totals { width: 153px; height: 110px; }
.display > label:first-of-type { margin-top: 13px; }
.select { position: relative; width: 162px; height: 24px; margin-top: 2px; }
.select select { width: 100%; height: 100%; appearance: none; border: 1px solid #6e6e6e; background: #fff; padding: 0 4px; opacity: 1; }
.select svg { position: absolute; right: 4px; top: 9px; pointer-events: none; }
.select path { fill: none; stroke: #555; stroke-width: 2; }
.select.off select { color: #7a7a7a; border-color: #b0b3b5; }
.select.off path { stroke: #bbb; }
.imgcap { margin-top: 69px; }
.hide { margin-top: 10px; height: 14px; }
.totals label { height: 23px; gap: 4px; margin-top: 0; }
.totals > label:first-of-type { margin-top: 3px; height: 20px; }
.sumrow { display: flex; gap: 6px; align-items: center; }
.sumrow .select { width: 111px; margin: 0; }
.totals .ofrows { height: 14px; margin: 3px 0 0 17px; }
.dlgfoot { display: flex; justify-content: flex-end; gap: 8px; margin-top: 7px; padding-right: 1px; }
.dlgfoot .push { width: 73px; }
</style>
